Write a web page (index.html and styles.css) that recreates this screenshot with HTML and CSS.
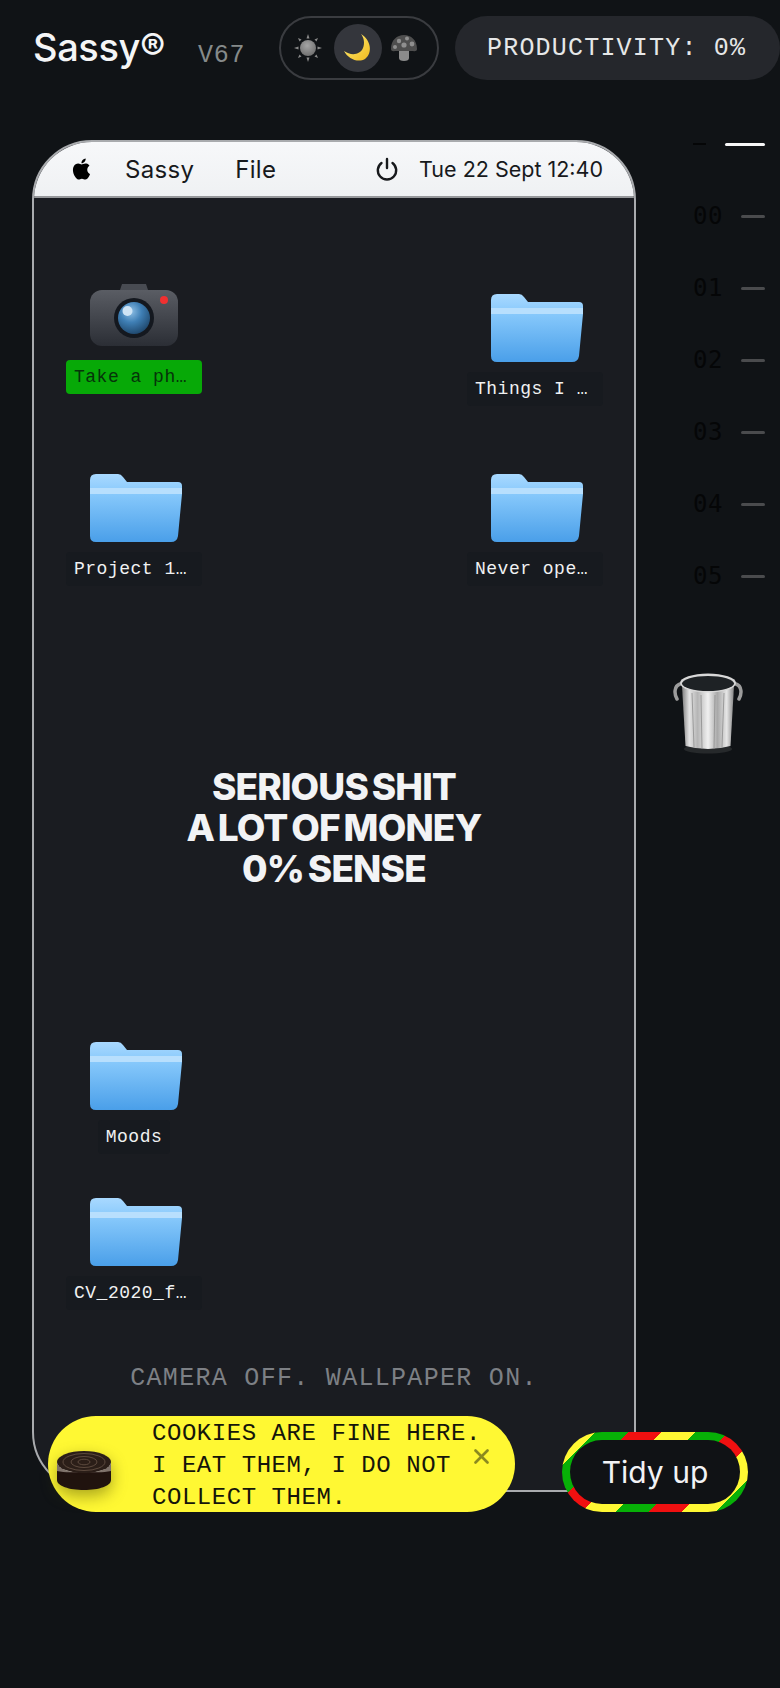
FILE: index.html
```html
<!DOCTYPE html>
<html lang="en">
<head>
  <meta charset="UTF-8" />
  <meta name="viewport" content="width=device-width, initial-scale=1.0" />
  <title>Sassy</title>
  <link rel="stylesheet" href="styles.css">
</head>
<body>
  <svg class="defs" width="0" height="0">
    <defs>
      <linearGradient id="folderBody" x1="0" y1="0" x2="0" y2="1">
        <stop offset="0" stop-color="#a9d9ff" />
        <stop offset="0.3" stop-color="#86c8fb" />
        <stop offset="1" stop-color="#4a9fe9" />
      </linearGradient>
      <symbol id="folder" viewBox="0 0 92 68">
        <path d="M0 6Q0 0 6 0H28Q31 0 33 3L37 8H88Q92 8 92 12V20L88 62Q87 68 81 68H6Q0 68 0 62Z" fill="url(#folderBody)" />
        <path d="M0 14H92V20H0Z" fill="#b8dffd" />
      </symbol>
    </defs>
  </svg>

  <header class="topbar">
    <div class="logo">Sassy®</div>
    <div class="version">V67</div>
    <div class="theme-switch">
      <svg class="sun" width="30" height="30" viewBox="0 0 30 30">
        <defs>
          <radialGradient id="sunFill" cx="0.45" cy="0.35" r="0.7">
            <stop offset="0" stop-color="#a5a5a5" />
            <stop offset="1" stop-color="#6c6c6c" />
          </radialGradient>
        </defs>
        <circle cx="15" cy="15" r="8" fill="url(#sunFill)" />
        <g fill="#8a8a8a">
          <path d="M13.5 5.5L15 1L16.5 5.5Z" />
          <path d="M13.5 24.5L15 29L16.5 24.5Z" />
          <path d="M5.5 13.5L1 15L5.5 16.5Z" />
          <path d="M24.5 13.5L29 15L24.5 16.5Z" />
          <path d="M6.5 8.5L5 5L8.5 6.5Z" />
          <path d="M23.5 8.5L25 5L21.5 6.5Z" />
          <path d="M6.5 21.5L5 25L8.5 23.5Z" />
          <path d="M23.5 21.5L25 25L21.5 23.5Z" />
        </g>
      </svg>
      <div class="moon-btn">
        <svg width="30" height="30" viewBox="0 0 30 30">
          <defs>
            <linearGradient id="moonFill" x1="0" y1="0" x2="1" y2="1">
              <stop offset="0" stop-color="#fff07a" />
              <stop offset="1" stop-color="#f0b91e" />
            </linearGradient>
          </defs>
          <path d="M18 1C28 7 30 20 22 26C15 30 5 26 1 18C8 23 17 22 20 15C22 10 21 5 18 1Z" fill="url(#moonFill)" />
        </svg>
      </div>
      <svg class="mushroom" width="28" height="28" viewBox="0 0 28 28">
        <path d="M9 17H19V24Q19 27 14 27Q9 27 9 24Z" fill="#8b8b8b" />
        <path d="M1 15C1 6 7 1 14 1C21 1 27 6 27 15C27 18 24 17 21 17H7C4 17 1 18 1 15Z" fill="#4e4e4e" />
        <circle cx="9" cy="7" r="2.2" fill="#8f8f8f" />
        <circle cx="17" cy="4.500" r="2" fill="#8f8f8f" />
        <circle cx="14" cy="11" r="2.600" fill="#8f8f8f" />
        <circle cx="22" cy="10" r="2.400" fill="#8f8f8f" />
        <circle cx="5" cy="13" r="2" fill="#8f8f8f" />
      </svg>
    </div>
    <div class="productivity">PRODUCTIVITY: 0%</div>
  </header>

  <main class="screen">
    <section class="window">
      <div class="menubar">
        <svg class="apple" width="21" height="24" viewBox="0 0 24 24"><path d="M12.152 6.896c-.948 0-2.415-1.078-3.96-1.04-2.04.027-3.91 1.183-4.961 3.014-2.117 3.675-.546 9.103 1.519 12.09 1.013 1.454 2.208 3.09 3.792 3.039 1.52-.065 2.09-.987 3.935-.987 1.831 0 2.35.987 3.96.948 1.637-.026 2.676-1.48 3.676-2.948 1.156-1.688 1.636-3.325 1.662-3.415-.039-.013-3.182-1.221-3.22-4.857-.026-3.04 2.48-4.494 2.597-4.559-1.429-2.09-3.623-2.324-4.39-2.376-2-.156-3.675 1.09-4.61 1.09zM15.53 3.83c.843-1.012 1.4-2.427 1.245-3.83-1.207.052-2.662.805-3.532 1.818-.78.896-1.454 2.338-1.273 3.714 1.338.104 2.715-.688 3.559-1.701" /></svg>
        <span class="menu-item">Sassy</span>
        <span class="menu-item menu-file">File</span>
        <svg class="power" width="24" height="24" viewBox="0 0 24 24" fill="none" stroke="#17191c" stroke-width="2.4" stroke-linecap="round">
          <path d="M12 2V11" />
          <path d="M6.5 6A9.2 9.2 0 1 0 17.5 6" />
        </svg>
        <span class="clock">Tue 22 Sept 12:40</span>
      </div>

      <div class="desktop">
        <div class="icon pos-camera">
          <svg class="camera" width="88" height="62" viewBox="0 0 88 62">
            <defs>
              <linearGradient id="camBody" x1="0" y1="0" x2="0" y2="1">
                <stop offset="0" stop-color="#5a5d64" />
                <stop offset="1" stop-color="#2b2e35" />
              </linearGradient>
              <radialGradient id="camLens" cx="0.4" cy="0.3" r="0.75">
                <stop offset="0" stop-color="#8fc0e6" />
                <stop offset="0.45" stop-color="#3f7fb5" />
                <stop offset="1" stop-color="#1d4468" />
              </radialGradient>
            </defs>
            <path d="M30 6L32 0H56L58 6Z" fill="#484b52" />
            <rect y="6" width="88" height="56" rx="12" fill="url(#camBody)" />
            <circle cx="44" cy="34" r="20" fill="#14181f" />
            <circle cx="44" cy="34" r="16" fill="url(#camLens)" />
            <circle cx="37.5" cy="27" r="5" fill="#cfe4f5" />
            <circle cx="74" cy="16" r="4" fill="#f03030" />
          </svg>
          <span class="icon-label selected">Take a ph…</span>
        </div>
        <div class="icon pos-things">
          <svg class="folder" width="92" height="68"><use href="#folder" /></svg>
          <span class="icon-label">Things I …</span>
        </div>
        <div class="icon pos-project">
          <svg class="folder" width="92" height="68"><use href="#folder" /></svg>
          <span class="icon-label">Project 1…</span>
        </div>
        <div class="icon pos-never">
          <svg class="folder" width="92" height="68"><use href="#folder" /></svg>
          <span class="icon-label">Never ope…</span>
        </div>
        <div class="icon pos-moods">
          <svg class="folder" width="92" height="68"><use href="#folder" /></svg>
          <span class="icon-label short">Moods</span>
        </div>
        <div class="icon pos-cv">
          <svg class="folder" width="92" height="68"><use href="#folder" /></svg>
          <span class="icon-label">CV_2020_f…</span>
        </div>

        <h1 class="headline">SERIOUS SHIT<br>A LOT OF MONEY<br>0% SENSE</h1>
        <p class="caption">CAMERA OFF. WALLPAPER ON.</p>
      </div>
    </section>

    <aside class="sidebar">
      <div class="scale-row"><span class="scale-dash"></span><span class="tick tick-active"></span></div>
      <div class="scale-row"><span class="scale-num">00</span><span class="tick"></span></div>
      <div class="scale-row"><span class="scale-num">01</span><span class="tick"></span></div>
      <div class="scale-row"><span class="scale-num">02</span><span class="tick"></span></div>
      <div class="scale-row"><span class="scale-num">03</span><span class="tick"></span></div>
      <div class="scale-row"><span class="scale-num">04</span><span class="tick"></span></div>
      <div class="scale-row"><span class="scale-num">05</span><span class="tick"></span></div>
      <svg class="trash" width="70" height="81" viewBox="0 0 70 81">
        <defs>
          <linearGradient id="metal" x1="0" y1="0" x2="1" y2="0">
            <stop offset="0" stop-color="#7f7f7f" />
            <stop offset="0.14" stop-color="#e4e4e4" />
            <stop offset="0.3" stop-color="#b5b5b5" />
            <stop offset="0.5" stop-color="#f0f0f0" />
            <stop offset="0.68" stop-color="#a8a8a8" />
            <stop offset="0.86" stop-color="#e6e6e6" />
            <stop offset="1" stop-color="#858585" />
          </linearGradient>
        </defs>
        <ellipse cx="35" cy="76" rx="24" ry="4.5" fill="#26292b" />
        <path d="M7 11C1 13 1 21 4 26" fill="none" stroke="#9c9c9c" stroke-width="3.5" stroke-linecap="round" />
        <path d="M63 11C69 13 69 21 66 26" fill="none" stroke="#9c9c9c" stroke-width="3.5" stroke-linecap="round" />
        <path d="M9 13L12.500 73Q35 79 57.500 73L61 13Z" fill="url(#metal)" />
        <g stroke="#8d8d8d" stroke-width="0.8" fill="none">
          <path d="M19 20L21 74" />
          <path d="M28 22L29 76" />
          <path d="M42 22L41 76" />
          <path d="M51 20L49 74" />
        </g>
        <ellipse cx="35" cy="10" rx="28" ry="9.500" fill="#d8d8d8" />
        <ellipse cx="35" cy="10.500" rx="26" ry="7.500" fill="#1e2225" />
      </svg>
    </aside>
  </main>

  <div class="cookie-bar">
    <svg class="cookie" width="54" height="40" viewBox="0 0 54 40">
      <path d="M0 12V29C0 35 12 39 27 39C42 39 54 35 54 29V12Z" fill="#20130e" />
      <path d="M0 12V20C8 22 18 21 27 21C36 21 46 22 54 20V12Z" fill="#efe7da" />
      <ellipse cx="27" cy="11" rx="27" ry="11" fill="#2b1e18" />
      <path d="M0 11C0 17 12 22 27 22C42 22 54 17 54 11V21C44 24 10 24 0 21Z" fill="#20130e" opacity="0.55" />
      <g fill="none" stroke="#5d4a3e" stroke-width="1">
        <ellipse cx="27" cy="11" rx="21" ry="8.500" />
        <ellipse cx="27" cy="11" rx="13" ry="5.500" />
        <ellipse cx="27" cy="11" rx="6" ry="2.800" />
      </g>
    </svg>
    <p class="cookie-text">COOKIES ARE FINE HERE.<br>I EAT THEM, I DO NOT<br>COLLECT THEM.</p>
    <svg class="cookie-close" width="15" height="15" viewBox="0 0 15 15" stroke="#8b8a1f" stroke-width="2.6" stroke-linecap="round">
      <path d="M1.500 1.500L13.500 13.500" />
      <path d="M13.500 1.500L1.500 13.500" />
    </svg>
  </div>

  <button class="tidy-btn"><span class="tidy-inner">Tidy up</span></button>
</body>
</html>
```

FILE: styles.css
```css
html, body {
  margin: 0;
  height: 1688px;
  overflow: hidden;
}
body {
  position: relative;
  font-family: Inter, 'Noto Sans', sans-serif;
  background-color: #101316;
  color: #f2f3f5;
}
.defs {
  position: absolute;
}
.topbar {
  display: flex;
  align-items: center;
  height: 64px;
  padding: 16px 0 0 33px;
}
.logo {
  flex: none;
  width: 165px;
  padding-bottom: 2px;
  font-size: 38px;
  font-weight: 500;
  letter-spacing: -0.4px;
  color: #f4f5f6;
}
.version {
  flex: none;
  width: 81px;
  padding-top: 14px;
  font-family: 'Liberation Mono', monospace;
  font-size: 25px;
  letter-spacing: 0.7px;
  color: #858a8a;
}
.theme-switch {
  flex: none;
  box-sizing: border-box;
  display: flex;
  align-items: center;
  width: 160px;
  height: 64px;
  padding-left: 12px;
  border: 2px solid #3a3c40;
  border-radius: 32px;
}
.moon-btn {
  display: flex;
  align-items: center;
  justify-content: center;
  width: 48px;
  height: 48px;
  margin: 0 8px 0 11px;
  border-radius: 50%;
  background-color: #34363c;
}
.productivity {
  flex: none;
  box-sizing: border-box;
  width: 325px;
  height: 64px;
  margin-left: 16px;
  padding-left: 32px;
  border-radius: 32px;
  background-color: #25272c;
  font-family: 'Liberation Mono', monospace;
  font-size: 25px;
  line-height: 66px;
  letter-spacing: 1.2px;
  color: #e6e7e8;
}
.screen {
  display: flex;
  align-items: flex-start;
  padding: 60px 0 0 32px;
}
.window {
  flex: none;
  box-sizing: border-box;
  display: flex;
  flex-direction: column;
  width: 604px;
  height: 1352px;
  border: 2px solid #a9abae;
  border-radius: 60px;
  background-color: #1a1c21;
  overflow: hidden;
}
.menubar {
  flex: none;
  display: flex;
  align-items: center;
  height: 54px;
  padding: 0 31px 0 37px;
  border-bottom: 2px solid #96989b;
  background: linear-gradient(#f7f8fa, #eff1f3);
  color: #17191c;
  font-size: 24px;
  letter-spacing: 0.3px;
}
.menu-item {
  margin-left: 33px;
}
.menu-file {
  margin-left: 41px;
}
.power {
  margin-left: auto;
  margin-right: 20px;
}
.clock {
  font-size: 21.500px;
  letter-spacing: 0;
}
.desktop {
  position: relative;
  flex: 1;
  display: flex;
  flex-direction: column;
  align-items: center;
  padding: 568px 0 96px;
  min-height: 0;
}
.icon {
  position: absolute;
  display: flex;
  flex-direction: column;
  align-items: center;
  width: 136px;
}
.pos-camera { left: 32px; top: 86px; }
.pos-things { left: 433px; top: 96px; }
.pos-project { left: 32px; top: 276px; }
.pos-never { left: 433px; top: 276px; }
.pos-moods { left: 32px; top: 844px; }
.pos-cv { left: 32px; top: 1000px; }
.camera {
  margin-bottom: 14px;
}
.folder {
  margin: 0 0 10px 4px;
}
.icon-label {
  box-sizing: border-box;
  width: 136px;
  height: 34px;
  padding: 0 8px;
  border-radius: 4px;
  background-color: #171a1f;
  font-family: 'Liberation Mono', monospace;
  font-size: 18px;
  line-height: 34px;
  letter-spacing: 0.5px;
  white-space: nowrap;
  color: #f0f1f2;
}
.icon-label.short {
  width: auto;
}
.icon-label.selected {
  background-color: #07a907;
  color: #06330a;
}
.headline {
  margin: 0;
  font-size: 37px;
  font-weight: 800;
  line-height: 41px;
  letter-spacing: -0.85px;
  word-spacing: -3.5px;
  text-align: center;
  color: #f2f3f5;
}
.caption {
  margin: auto 0 0;
  font-family: 'Liberation Mono', monospace;
  font-size: 25px;
  line-height: 30px;
  letter-spacing: 1.3px;
  color: #7d8085;
}
.sidebar {
  flex: none;
  display: flex;
  flex-direction: column;
  align-items: stretch;
  width: 72px;
  margin-top: -32px;
  margin-left: 57px;
}
.scale-row {
  display: flex;
  align-items: center;
  justify-content: space-between;
  height: 72px;
}
.scale-num {
  font-family: 'DejaVu Sans Mono', monospace;
  font-size: 24px;
  letter-spacing: 0.5px;
  color: #050607;
}
.scale-dash {
  width: 13px;
  height: 2px;
  background-color: #050607;
}
.tick {
  width: 24px;
  height: 3px;
  border-radius: 2px;
  background-color: #4a4b4d;
}
.tick-active {
  width: 40px;
  background-color: #f7f7f7;
}
.trash {
  margin: 61px 0 0 -20px;
}
.cookie-bar {
  position: absolute;
  left: 48px;
  top: 1416px;
  display: flex;
  box-sizing: border-box;
  width: 467px;
  height: 96px;
  padding-left: 9px;
  border-radius: 48px;
  background-color: #fff833;
  color: #15150a;
}
.cookie {
  flex: none;
  margin-top: 35px;
  filter: drop-shadow(0 6px 8px rgba(60, 60, 0, 0.45));
}
.cookie-text {
  flex: none;
  width: 322px;
  margin: 2px 0 0 41px;
  font-family: 'Liberation Mono', monospace;
  font-size: 24px;
  line-height: 32px;
  letter-spacing: 0.55px;
  white-space: nowrap;
}
.cookie-close {
  flex: none;
  margin-top: 33px;
}
.tidy-btn {
  position: absolute;
  left: 562px;
  top: 1432px;
  box-sizing: border-box;
  width: 186px;
  height: 80px;
  padding: 8px;
  border: none;
  border-radius: 40px;
  background: repeating-linear-gradient(135deg, #fff833 0 23.57px, #07b007 23.57px 47.14px, #f01010 47.14px 70.71px);
}
.tidy-inner {
  display: block;
  height: 64px;
  border-radius: 32px;
  background-color: #101215;
  font-family: Inter, 'Noto Sans', sans-serif;
  font-size: 30px;
  line-height: 64px;
  text-align: center;
  color: #f2f3f5;
}
```
